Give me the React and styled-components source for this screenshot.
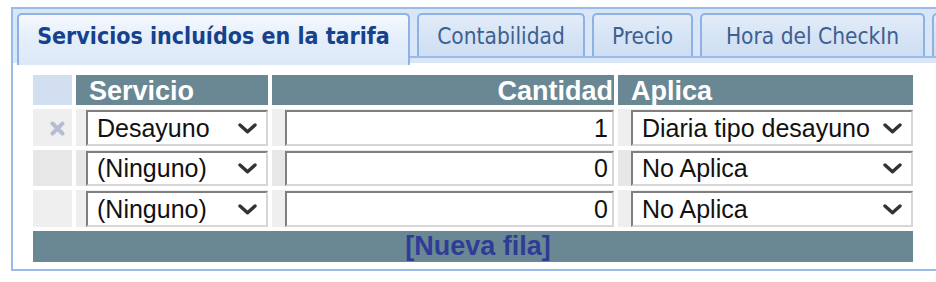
import React from 'react'
import styled, { createGlobalStyle } from 'styled-components'

const GlobalStyle = createGlobalStyle`
  html, body {
    margin: 0;
    padding: 0;
    background: #ffffff;
    overflow: hidden;
  }
  body {
    padding: 7px 0 0 11px;
  }
`

const tabs = [
  { label: 'Servicios incluídos en la tarifa', width: 393, active: true },
  { label: 'Contabilidad', width: 168 },
  { label: 'Precio', width: 101 },
  { label: 'Hora del CheckIn', width: 225 },
  { label: '', width: 80 },
]

const rows = [
  { servicio: 'Desayuno', cantidad: '1', aplica: 'Diaria tipo desayuno', removable: true },
  { servicio: '(Ninguno)', cantidad: '0', aplica: 'No Aplica' },
  { servicio: '(Ninguno)', cantidad: '0', aplica: 'No Aplica' },
]

const Chevron = () => (
  <svg width="19" height="11" viewBox="0 0 19 11">
    <polyline points="2,2 9.5,8.8 17,2" fill="none" stroke="#333" strokeWidth="3.4" strokeLinecap="round" strokeLinejoin="round" />
  </svg>
)

const RemoveIcon = () => (
  <svg width="15" height="15" viewBox="0 0 15 15">
    <path d="M2.5 2.5 L12.5 12.5 M12.5 2.5 L2.5 12.5" stroke="#b3bed5" strokeWidth="4" strokeLinecap="round" />
  </svg>
)

const App = () => {
  return (
    <>
      <GlobalStyle />
      <Panel>
        <Header>
          <TabRow>
            {tabs.map((t, i) => (
              <Tab key={i} active={t.active} w={t.width}>{t.label}</Tab>
            ))}
          </TabRow>
          <Spacer />
        </Header>
        <Body>
          <Grid>
            <Corner />
            <HeadCell>Servicio</HeadCell>
            <HeadCell align="right">Cantidad</HeadCell>
            <HeadCell>Aplica</HeadCell>
            {rows.map((r, i) => (
              <React.Fragment key={i}>
                <Cell shade={i % 2} center>
                  {r.removable && <RemoveIcon />}
                </Cell>
                <Cell shade={i % 2} pad={10}>
                  <SelectBox>
                    <span>{r.servicio}</span>
                    <Chevron />
                  </SelectBox>
                </Cell>
                <Cell shade={i % 2} pad={13}>
                  <InputBox>{r.cantidad}</InputBox>
                </Cell>
                <Cell shade={i % 2} pad={13}>
                  <SelectBox>
                    <span>{r.aplica}</span>
                    <Chevron />
                  </SelectBox>
                </Cell>
              </React.Fragment>
            ))}
            <FooterRow>[Nueva fila]</FooterRow>
          </Grid>
        </Body>
      </Panel>
    </>
  )
}

const Panel = styled.div`
  width: 960px;
  border: 2px solid #99bbe8;
  border-right: none;
  background: #ffffff;
`

const Header = styled.div`
  background: #d9e6f7;
  padding: 4px 0 0 4px;
`

const TabRow = styled.div`
  display: flex;
  align-items: flex-start;
  gap: 7px;
  height: 43px;
  border-bottom: 2px solid #99bbe8;
`

const Tab = styled.div`
  position: relative;
  z-index: ${(p) => (p.active ? 2 : 1)};
  box-sizing: border-box;
  flex: none;
  width: ${(p) => p.w}px;
  height: ${(p) => (p.active ? '52px' : '43px')};
  padding-bottom: ${(p) => (p.active ? '9px' : '0')};
  display: flex;
  align-items: center;
  justify-content: center;
  border: 2px solid #8db2e3;
  border-bottom: none;
  border-radius: 5px 5px 0 0;
  background: ${(p) =>
    p.active
      ? 'linear-gradient(#f6f9fe, #e6effb 40%, #dde9f8)'
      : 'linear-gradient(#e4edf9, #d6e4f6 50%, #cfdef3)'};
  font-family: 'DejaVu Sans Condensed', 'DejaVu Sans', sans-serif;
  font-size: ${(p) => (p.active ? '23px' : '22.5px')};
  font-weight: ${(p) => (p.active ? 700 : 400)};
  color: ${(p) => (p.active ? '#15428b' : '#3f5f8f')};
  white-space: nowrap;
`

const Spacer = styled.div`
  height: 5px;
  background: #d9e6f7;
`

const Body = styled.div`
  padding: 12px 0 7px 20px;
`

const Grid = styled.div`
  display: grid;
  grid-template-columns: 39px 192px 342px 295px;
  grid-template-rows: 30px 37px 36px 37px 31px;
  gap: 4px;
  font-family: 'Liberation Sans', Arial, sans-serif;
`

const Corner = styled.div`
  background: #d1dff0;
`

const HeadCell = styled.div`
  background: #6a8894;
  color: #ffffff;
  font-size: 27px;
  font-weight: 700;
  line-height: 32px;
  padding: ${(p) => (p.align === 'right' ? '0 1px 0 0' : '0 0 0 13px')};
  text-align: ${(p) => p.align || 'left'};
  white-space: nowrap;
  overflow: hidden;
`

const Cell = styled.div`
  background: ${(p) => (p.shade ? '#e7e7e7' : '#efefef')};
  padding-top: 1px;
  padding-left: ${(p) => (p.center ? '10px' : `${p.pad || 0}px`)};
  display: flex;
  align-items: ${(p) => (p.center ? 'center' : 'stretch')};
  justify-content: ${(p) => (p.center ? 'center' : 'flex-start')};
`

const fieldBorder = `
  box-sizing: border-box;
  flex: 1;
  min-width: 0;
  background: #ffffff;
  border-top: 2px solid #7f7f7f;
  border-left: 2px solid #7f7f7f;
  border-right: 2px solid #d6d6d6;
  border-bottom: 2px solid #d6d6d6;
  font-size: 25px;
  color: #111111;
  white-space: nowrap;
`

const SelectBox = styled.div`
  ${fieldBorder}
  display: flex;
  align-items: center;
  justify-content: space-between;
  padding: 0 9px 0 9px;
  overflow: hidden;
  svg {
    flex: none;
    margin-left: 6px;
  }
`

const InputBox = styled.div`
  ${fieldBorder}
  display: flex;
  align-items: center;
  justify-content: flex-end;
  padding: 0 4px 0 0;
`

const FooterRow = styled.div`
  grid-column: 1 / -1;
  background: #6a8894;
  color: #2f3c95;
  font-size: 27px;
  font-weight: 700;
  line-height: 31px;
  text-align: center;
  padding-left: 10px;
`

export default App
